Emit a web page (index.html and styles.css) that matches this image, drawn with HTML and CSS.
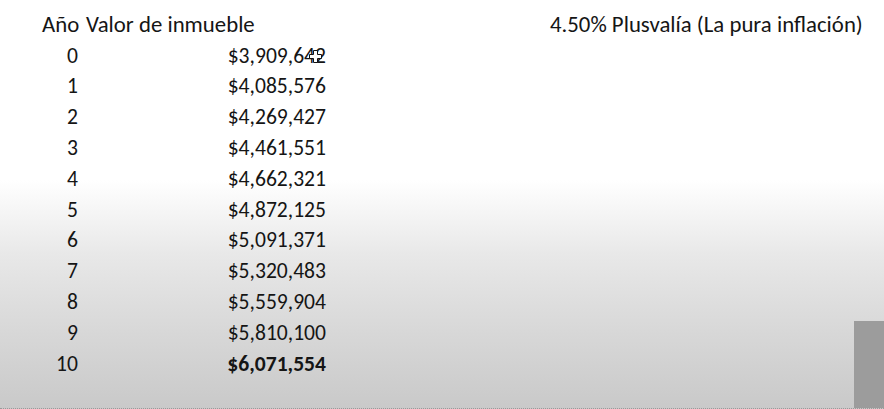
FILE: index.html
```html
<!DOCTYPE html>
<html lang="es">
<head>
<meta charset="utf-8">
<link rel="stylesheet" href="styles.css">
</head>
<body>
<div class="sheet">
  <div class="table">
    <div class="yr head">Año</div><div class="val head">Valor de inmueble</div>
    <div class="yr">0</div><div class="val">$3,909,642<span class="cursor"><svg width="13" height="13" viewBox="0 0 13 13"><path d="M4.5 0.5h4v4h4v4h-4v4h-4v-4h-4v-4h4z" fill="#fff" stroke="#111" stroke-width="1"/></svg></span></div>
    <div class="yr">1</div><div class="val">$4,085,576</div>
    <div class="yr">2</div><div class="val">$4,269,427</div>
    <div class="yr">3</div><div class="val">$4,461,551</div>
    <div class="yr">4</div><div class="val">$4,662,321</div>
    <div class="yr">5</div><div class="val">$4,872,125</div>
    <div class="yr">6</div><div class="val">$5,091,371</div>
    <div class="yr">7</div><div class="val">$5,320,483</div>
    <div class="yr">8</div><div class="val">$5,559,904</div>
    <div class="yr">9</div><div class="val">$5,810,100</div>
    <div class="yr">10</div><div class="val bold">$6,071,554</div>
  </div>
  <div class="note">4.50% Plusvalía (La pura inflación)</div>
</div>
<div class="corner"></div>
</body>
</html>
```
FILE: styles.css
```css
html, body {
  margin: 0;
  padding: 0;
  width: 884px;
  height: 409px;
  overflow: hidden;
}
body {
  position: relative;
  box-sizing: border-box;
  border-bottom: 1px dotted #9a9a9a;
  background: linear-gradient(to bottom, #ffffff 0px, #ffffff 180px, #e8e8e8 255px, #d8d8d8 330px, #c9c9c9 409px);
  font-family: "Carlito", "Lato", sans-serif;
  font-size: 21.6px;
  color: #151515;
}
.sheet {
  display: flex;
  padding: 9px 0 0 42px;
}
.table {
  display: grid;
  grid-template-columns: 36px 240px;
  column-gap: 8px;
  grid-auto-rows: 30.8px;
  align-items: center;
}
.yr {
  text-align: right;
  white-space: nowrap;
}
.val {
  text-align: right;
  position: relative;
  white-space: nowrap;
}
.head {
  text-align: left;
  font-size: 22.8px;
}
.yr.head {
  text-align: left;
}
.bold {
  font-weight: bold;
}
.cursor {
  position: absolute;
  right: 4px;
  top: 8px;
  line-height: 0;
}
.note {
  margin-left: 224px;
  height: 30.8px;
  line-height: 30.8px;
  font-size: 22.8px;
  white-space: nowrap;
}
.corner {
  position: absolute;
  left: 854px;
  top: 321px;
  width: 30px;
  height: 87px;
  background: #9c9c9c;
}
```
